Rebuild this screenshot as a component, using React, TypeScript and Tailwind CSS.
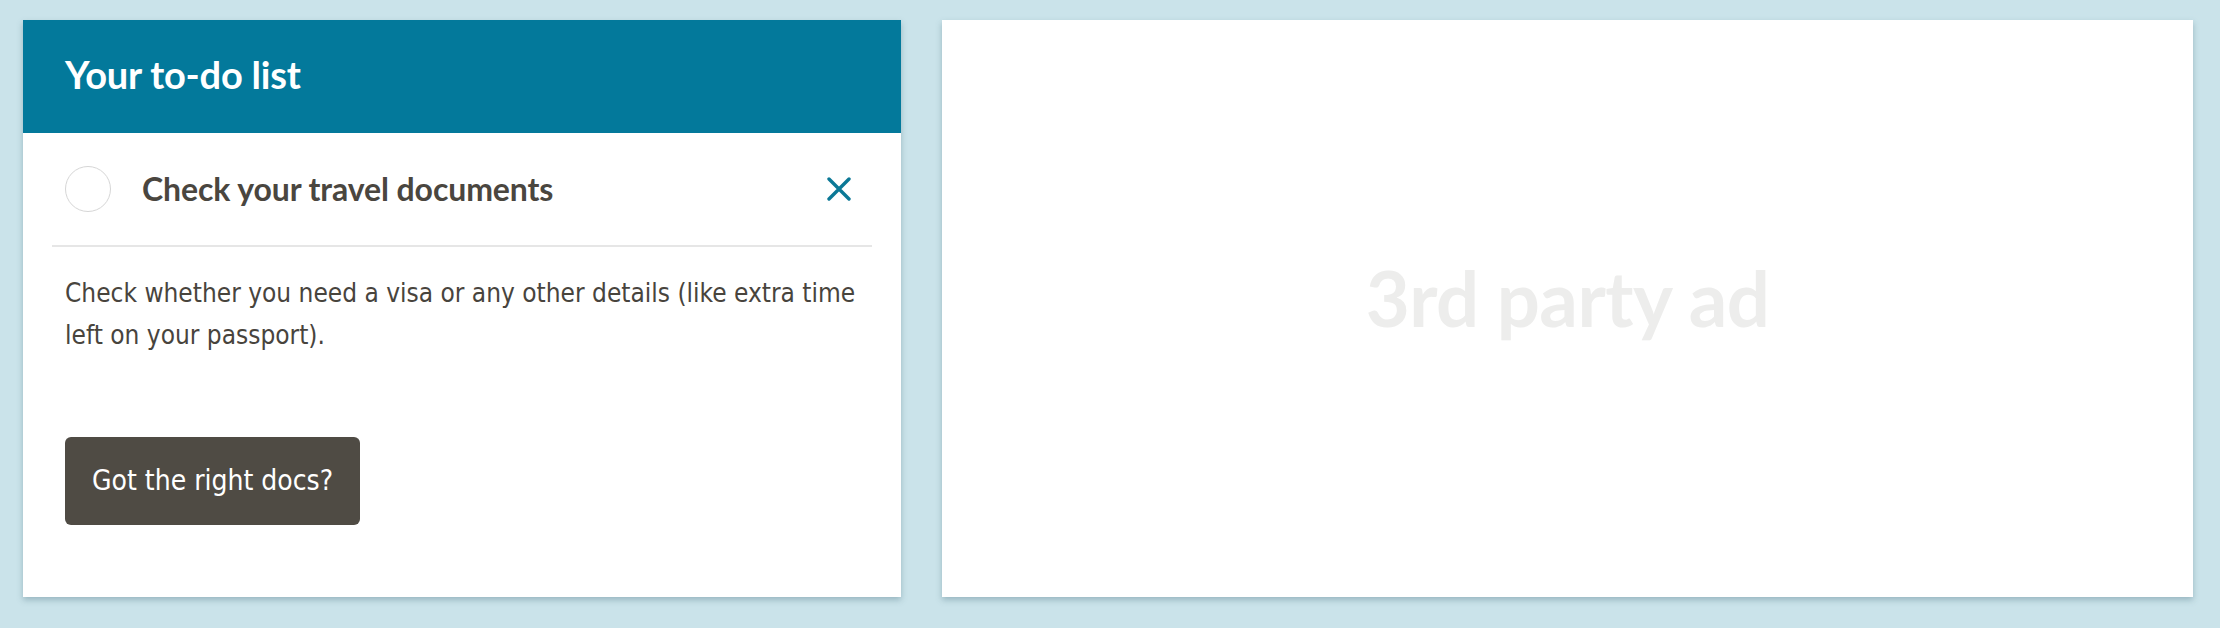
import React from "react";

const heading = { fontFamily: "Lato, 'Open Sans', sans-serif" };
const body = { fontFamily: "'DejaVu Sans Condensed', 'DejaVu Sans', sans-serif" };

function CloseIcon() {
  return (
    <svg width="24" height="24" viewBox="0 0 24 24" fill="none">
      <path
        d="M2 2L22 22M22 2L2 22"
        stroke="#0b7896"
        strokeWidth="3.4"
        strokeLinecap="round"
      />
    </svg>
  );
}

function TodoCard() {
  return (
    <div className="w-[878px] shrink-0 bg-white shadow-[0_3px_6px_rgba(60,100,115,0.35)] flex flex-col">
      <div className="h-[113px] bg-[#03799b] flex items-center px-[42px] pb-[6px]">
        <h2
          style={heading}
          className="text-white text-[38px] font-bold tracking-[-0.2px] leading-none"
        >
          Your to-do list
        </h2>
      </div>
      <div className="px-[29px]">
        <div className="h-[114px] flex items-center px-[13px] border-b-2 border-[#e6e6e6]">
          <div className="w-[46px] h-[46px] rounded-full border-[1.5px] border-[#d6d6d6] shrink-0" />
          <span
            style={heading}
            className="ml-[31px] text-[32px] font-bold text-[#4a463f] tracking-[-0.1px] leading-none"
          >
            Check your travel documents
          </span>
          <button className="ml-auto mr-[8px] p-0">
            <CloseIcon />
          </button>
        </div>
      </div>
      <div className="px-[42px] pt-[25px] pb-[72px]">
        <p
          style={body}
          className="font-stretch-condensed text-[26px] leading-[42px] text-[#48443d]"
        >
          Check whether you need a visa or any other details (like extra time
          left on your passport).
        </p>
        <button
          style={body}
          className="font-stretch-condensed mt-[81px] h-[88px] px-[27px] rounded-[6px] bg-[#4f4b44] text-white text-[28px]"
        >
          Got the right docs?
        </button>
      </div>
    </div>
  );
}

function AdCard() {
  return (
    <div className="flex-1 bg-white shadow-[0_3px_6px_rgba(60,100,115,0.35)] flex items-center justify-center pb-[22px]">
      <span
        style={heading}
        className="text-[76px] font-bold text-[#ededec] tracking-[-0.5px] leading-none"
      >
        3rd party ad
      </span>
    </div>
  );
}

export default function App() {
  return (
    <div className="w-[2220px] h-[628px] bg-[#cae3ea] pl-[23px] pr-[27px] pt-[20px]">
      <div className="flex gap-[41px] w-full h-[577px]">
        <TodoCard />
        <AdCard />
      </div>
    </div>
  );
}
